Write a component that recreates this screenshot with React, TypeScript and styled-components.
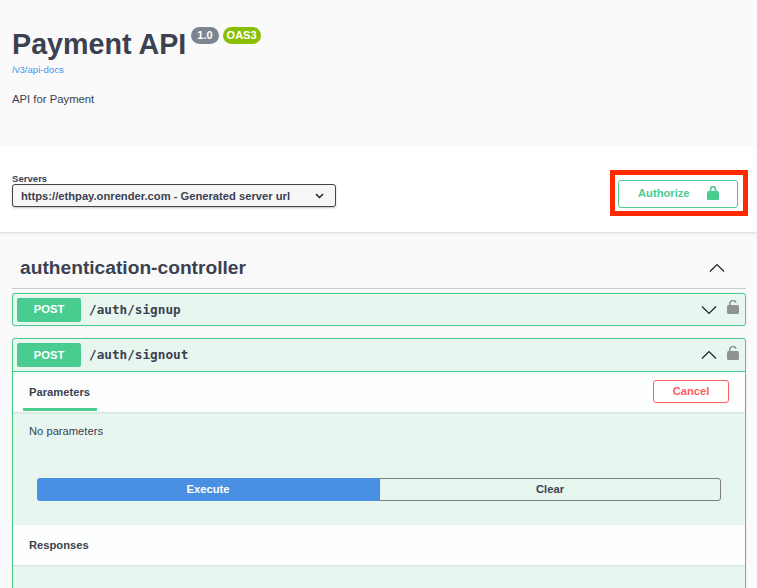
import styled, { createGlobalStyle } from "styled-components";

const GlobalStyle = createGlobalStyle`
  html, body {
    margin: 0;
    padding: 0;
    height: 588px;
    overflow: hidden;
    background: #fafafa;
    color: #3b4151;
    font-family: "Liberation Sans", Arial, sans-serif;
  }
`;

const Page = styled.div`
  height: 588px;
  overflow: hidden;
`;

const Header = styled.header`
  height: 146px;
  box-sizing: border-box;
  padding: 26px 12px 0;
  background: #fafafa;
`;

const TitleRow = styled.div`
  display: flex;
  align-items: flex-start;
  height: 38px;
`;

const Title = styled.h1`
  margin: 0;
  font-size: 28.7px;
  line-height: 36px;
  font-weight: 700;
  color: #3b4151;
`;

const Badge = styled.span<{ $bg: string; $pad: number; $gap: number }>`
  height: 17px;
  margin: 1px 0 0 ${(props) => props.$gap}px;
  padding: 0 ${(props) => props.$pad}px;
  border-radius: 9px;
  background: ${(props) => props.$bg};
  color: #fff;
  font-size: 11px;
  line-height: 17px;
  font-weight: 700;
`;

const DocsLink = styled.a`
  display: block;
  font-size: 9.6px;
  line-height: 12px;
  color: #4a94ea;
`;

const Description = styled.p`
  margin: 16px 0 0;
  font-size: 11.3px;
  line-height: 14px;
  color: #3b4151;
`;

const SchemeBar = styled.section`
  height: 87px;
  box-sizing: border-box;
  display: flex;
  justify-content: space-between;
  align-items: flex-start;
  padding: 24px 9px 0 12px;
  background: #fff;
  border-bottom: 1px solid #e2e2e2;
  box-shadow: 0 1px 2px rgba(0, 0, 0, 0.06);
`;

const ServerLabel = styled.div`
  margin-top: 3px;
  font-size: 9.6px;
  line-height: 11px;
  font-weight: 700;
  color: #3b4151;
`;

const ServerSelect = styled.div`
  width: 324px;
  height: 23px;
  box-sizing: border-box;
  display: flex;
  align-items: center;
  justify-content: space-between;
  padding: 0 11px 0 8px;
  background: #f7f7f7;
  border: 1px solid #41444e;
  border-radius: 3px;
  box-shadow: 0 1px 2px rgba(0, 0, 0, 0.25);
  font-size: 11.2px;
  font-weight: 700;
  color: #3b4151;
`;

const Highlight = styled.div`
  width: 138px;
  height: 46px;
  box-sizing: border-box;
  padding: 5px 5px 3px 3px;
  border: 5px solid #ff2a00;
  display: flex;
  align-items: stretch;
`;

const AuthorizeButton = styled.div`
  flex: 1;
  display: flex;
  align-items: center;
  box-sizing: border-box;
  padding: 0 18px 2px 19px;
  justify-content: space-between;
  border: 1px solid #49cc90;
  border-radius: 3px;
  font-size: 11.2px;
  font-weight: 700;
  color: #49cc90;
`;

const Section = styled.section`
  padding: 0 11px 0 12px;
`;

const SectionTitle = styled.div`
  height: 56px;
  box-sizing: border-box;
  display: flex;
  align-items: center;
  justify-content: space-between;
  padding: 15px 21px 0 8px;
  border-bottom: 1px solid #c9cacc;
  font-size: 19.2px;
  font-weight: 700;
  color: #3b4151;
`;

const Operation = styled.div<{ $open?: boolean }>`
  margin-top: ${(props) => (props.$open ? "12px" : "4px")};
  background: #e8f6f0;
  border: 1px solid #49cc90;
  border-radius: 3px;
  box-shadow: 0 0 2px rgba(0, 0, 0, 0.12);
`;

const Summary = styled.div<{ $open?: boolean }>`
  height: ${(props) => (props.$open ? "33px" : "31px")};
  box-sizing: border-box;
  display: flex;
  align-items: center;
  padding: 0 6px 0 4px;
  border-bottom: ${(props) => (props.$open ? "1px solid #49cc90" : "none")};
`;

const Method = styled.span`
  width: 64px;
  height: 24px;
  box-sizing: border-box;
  padding-bottom: 1px;
  display: flex;
  align-items: center;
  justify-content: center;
  background: #49cc90;
  border-radius: 2px;
  color: #fff;
  font-size: 11.2px;
  font-weight: 700;
`;

const OpPath = styled.span<{ $open?: boolean }>`
  flex: 1;
  margin-left: 8px;
  padding-bottom: ${(props) => (props.$open ? "2px" : "0")};
  font-family: "DejaVu Sans Mono", "Liberation Mono", monospace;
  font-size: 12.7px;
  font-weight: 700;
  color: #3b4151;
`;

const LockIcon = styled.svg<{ $gap?: number; $lift?: number }>`
  display: block;
  margin-left: ${(props) => props.$gap ?? 0}px;
  margin-bottom: ${(props) => props.$lift ?? 0}px;
`;

const TabHeader = styled.div`
  height: 40px;
  box-sizing: border-box;
  display: flex;
  align-items: flex-start;
  justify-content: space-between;
  padding: 0 16px 0 10px;
  background: rgba(255, 255, 255, 0.85);
  box-shadow: 0 1px 2px rgba(0, 0, 0, 0.1);
`;

const Tab = styled.div`
  width: 74px;
  height: 39px;
  box-sizing: border-box;
  padding: 14px 0 0 6px;
  border-bottom: 3px solid #49cc90;
  font-size: 11.2px;
  line-height: 13px;
  font-weight: 700;
  color: #3b4151;
`;

const CancelButton = styled.div`
  width: 76px;
  height: 23px;
  box-sizing: border-box;
  padding-bottom: 1px;
  display: flex;
  align-items: center;
  justify-content: center;
  margin-top: 8px;
  border: 1px solid #ff6060;
  border-radius: 3px;
  background: #fff;
  color: #ff6060;
  font-size: 11.2px;
  font-weight: 700;
`;

const ParamsBody = styled.div`
  height: 53px;
  box-sizing: border-box;
  padding: 12px 16px 0;
  font-size: 11.2px;
  line-height: 14px;
  color: #3b4151;
`;

const ExecuteRow = styled.div`
  display: flex;
  height: 60px;
  padding: 13px 24px 0;
  box-sizing: border-box;
`;

const ExecuteButton = styled.div`
  flex: 0 0 342px;
  height: 23px;
  box-sizing: border-box;
  padding-bottom: 1px;
  display: flex;
  align-items: center;
  justify-content: center;
  background: #4990e2;
  border-radius: 3px 0 0 3px;
  color: #fff;
  font-size: 11.2px;
  font-weight: 700;
`;

const ClearButton = styled.div`
  flex: 1;
  height: 23px;
  box-sizing: border-box;
  padding-bottom: 1px;
  display: flex;
  align-items: center;
  justify-content: center;
  border: 1px solid #7d7d7d;
  border-radius: 0 3px 3px 0;
  color: #3b4151;
  font-size: 11.2px;
  font-weight: 700;
`;

const ResponsesHeader = styled.div`
  height: 40px;
  box-sizing: border-box;
  display: flex;
  align-items: center;
  padding: 0 16px;
  background: rgba(255, 255, 255, 0.9);
  box-shadow: 0 1px 2px rgba(0, 0, 0, 0.1);
  font-size: 11.2px;
  font-weight: 700;
  color: #3b4151;
`;

const ResponsesBody = styled.div`
  height: 60px;
`;

function Chevron({ up }: { up?: boolean }) {
  return (
    <svg width="16" height="16" viewBox="0 0 16 16" fill="none" stroke="#222" strokeWidth="1.2">
      <path d={up ? "M1 11.5 8 4.5l7 7" : "M1 4.5l7 7 7-7"} />
    </svg>
  );
}

function Lock({ color, open, gap, lift }: { color: string; open?: boolean; gap?: number; lift?: number }) {
  return (
    <LockIcon $gap={gap} $lift={lift} width="12" height="14" viewBox="0 0 12 14">
      <path
        d={open ? "M2.8 5.5V3.6a3.2 3.2 0 0 1 6.2-1" : "M3.6 5.5V3a2.4 2.4 0 0 1 4.8 0v2.5"}
        fill="none"
        stroke={color}
        strokeWidth="1.6"
      />
      <rect x="0" y="5" width="12" height="9" rx="1.5" fill={color} />
    </LockIcon>
  );
}

function App() {
  return (
    <Page>
      <GlobalStyle />
      <Header>
        <TitleRow>
          <Title>Payment API</Title>
          <Badge $bg="#7d8492" $pad={6} $gap={5}>1.0</Badge>
          <Badge $bg="#89bf04" $pad={4} $gap={4}>OAS3</Badge>
        </TitleRow>
        <DocsLink>/v3/api-docs</DocsLink>
        <Description>API for Payment</Description>
      </Header>
      <SchemeBar>
        <div>
          <ServerLabel>Servers</ServerLabel>
          <ServerSelect>
            <span>https://ethpay.onrender.com - Generated server url</span>
            <svg width="9" height="6" viewBox="0 0 9 6" fill="none" stroke="#222" strokeWidth="1.5">
              <path d="M1 1l3.5 3.5L8 1" />
            </svg>
          </ServerSelect>
        </div>
        <Highlight>
          <AuthorizeButton>
            <span>Authorize</span>
            <Lock color="#49cc90" />
          </AuthorizeButton>
        </Highlight>
      </SchemeBar>
      <Section>
        <SectionTitle>
          <span>authentication-controller</span>
          <Chevron up />
        </SectionTitle>
        <Operation>
          <Summary>
            <Method>POST</Method>
            <OpPath>/auth/signup</OpPath>
            <Chevron />
            <Lock color="#8f9490" open gap={10} lift={5} />
          </Summary>
        </Operation>
        <Operation $open>
          <Summary $open>
            <Method>POST</Method>
            <OpPath $open>/auth/signout</OpPath>
            <Chevron up />
            <Lock color="#8f9490" open gap={10} lift={4} />
          </Summary>
          <TabHeader>
            <Tab>Parameters</Tab>
            <CancelButton>Cancel</CancelButton>
          </TabHeader>
          <ParamsBody>No parameters</ParamsBody>
          <ExecuteRow>
            <ExecuteButton>Execute</ExecuteButton>
            <ClearButton>Clear</ClearButton>
          </ExecuteRow>
          <ResponsesHeader>Responses</ResponsesHeader>
          <ResponsesBody />
        </Operation>
      </Section>
    </Page>
  );
}

export default App;
